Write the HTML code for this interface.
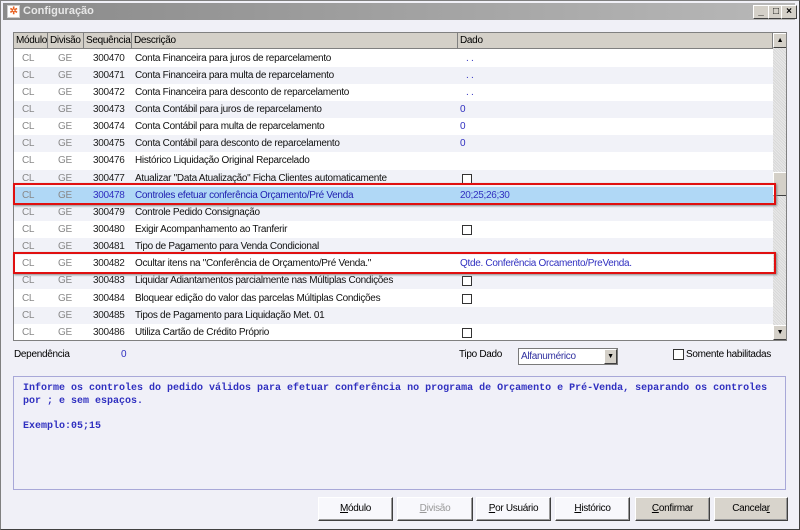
<!DOCTYPE html>
<html><head><meta charset="utf-8"><style>
*{margin:0;padding:0;box-sizing:border-box}
body{width:800px;height:530px;overflow:hidden;background:#d4d0c8;font-family:"Liberation Sans",sans-serif;font-size:10px;letter-spacing:-0.3px;position:relative}
.a{position:absolute}
#win{left:0;top:0;width:800px;height:530px;background:#f0f0f7;border:1px solid #808080;border-right-color:#404040;border-bottom-color:#404040}
#title{left:3px;top:3px;width:792px;height:17px;background:linear-gradient(90deg,#8a8a8a,#b8b8b8);color:#e8e8e8;font-weight:bold;font-size:11px;letter-spacing:0;line-height:17px;padding-left:20px}
.tb{top:5px;width:16px;height:14px;background:#d4d0c8;border:1px solid;border-color:#fff #404040 #404040 #fff;font-size:10px;line-height:11px;text-align:center;font-weight:bold;letter-spacing:0}
#grid{left:13px;top:32px;width:774px;height:309px;border:1px solid #808080;background:#fff;overflow:hidden}
.hd{top:0;height:16px;background:#d4d0c8;border-right:1px solid #808080;border-bottom:1px solid #808080;line-height:15px;padding-left:2px;overflow:hidden;white-space:nowrap}
.row{left:0;width:759px;height:17px;line-height:17px;white-space:nowrap}
.row span{position:absolute;top:0}
.c1{left:8px;color:#888}.c2{left:44px;color:#888}.c3{left:79px;color:#222}.c4{left:121px;color:#111}.c5{left:446px;color:#3030c0}
.cb{display:inline-block;width:10px;height:10px;border:1px solid #333;background:#fff;margin-top:4px}
.btn{top:497px;height:24px;border:1px solid;border-color:#fff #404040 #404040 #fff;background:#f8f8fc;text-align:center;line-height:21px;box-shadow:inset -1px -1px 0 #999}
.red{border:2px solid #e01010;box-shadow:1px 1px 2px #888}
</style></head><body>
<div id="win" class="a"></div>
<div id="title" class="a">Configuração</div>
<div class="a" style="left:7px;top:5px;width:13px;height:13px;background:#fff;border:1px solid #ccc;color:#e86020;font-size:10px;line-height:11px;text-align:center;font-weight:bold">✲</div>
<div class="a tb" style="left:753px">_</div>
<div class="a tb" style="left:768px">□</div>
<div class="a tb" style="left:781px">×</div>
<div id="grid" class="a">
<div class="a hd" style="left:0;width:34px">Módulo</div>
<div class="a hd" style="left:34px;width:36px">Divisão</div>
<div class="a hd" style="left:70px;width:48px">Sequência</div>
<div class="a hd" style="left:118px;width:326px">Descrição</div>
<div class="a hd" style="left:444px;width:315px">Dado</div>
<div class="a" style="left:759px;top:0;width:14px;height:309px;background:repeating-linear-gradient(45deg,#e8e8e8 0 1px,#d8d8d8 1px 2px)"></div>
<div class="a" style="left:759px;top:0;width:14px;height:15px;background:#d4d0c8;border:1px solid;border-color:#fff #404040 #404040 #fff;font-size:7px;text-align:center;line-height:13px">▲</div>
<div class="a" style="left:759px;top:139px;width:14px;height:24px;background:#d4d0c8;border:1px solid;border-color:#fff #404040 #404040 #fff"></div>
<div class="a" style="left:759px;top:292px;width:14px;height:15px;background:#d4d0c8;border:1px solid;border-color:#fff #404040 #404040 #fff;font-size:7px;text-align:center;line-height:13px">▼</div>
<div id="rows"></div>
</div>
<div class="a red" style="left:13px;top:183px;width:763px;height:22px"></div>
<div class="a red" style="left:13px;top:252px;width:763px;height:22px"></div>

<div class="a" style="left:14px;top:349px">Dependência</div>
<div class="a" style="left:121px;top:349px;color:#3030c0">0</div>
<div class="a" style="left:459px;top:349px">Tipo Dado</div>
<div class="a" style="left:518px;top:348px;width:100px;height:17px;background:#fff;border:1px solid #7a7a7a;line-height:15px;padding-left:2px;color:#3030a0">Alfanumérico</div>
<div class="a" style="left:604px;top:349px;width:13px;height:15px;background:#d4d0c8;border:1px solid;border-color:#fff #404040 #404040 #fff;font-size:7px;text-align:center;line-height:13px">▼</div>
<div class="a" style="left:673px;top:349px;width:11px;height:11px;border:1px solid #333;background:#fff"></div>
<div class="a" style="left:686px;top:349px">Somente habilitadas</div>
<div class="a" style="left:13px;top:376px;width:773px;height:114px;border:1px solid #a8a8d8;background:#f0f0f8;font-family:'Liberation Mono',monospace;font-weight:bold;font-size:10px;letter-spacing:0;color:#3030c0;line-height:12.5px;padding:6px 9px;white-space:nowrap">Informe os controles do pedido válidos para efetuar conferência no programa de Orçamento e Pré-Venda, separando os controles<br>por ; e sem espaços.<br><br>Exemplo:05;15</div>
<div class="a btn" style="left:318px;width:75px"><u>M</u>ódulo</div>
<div class="a btn" style="left:397px;width:76px;color:#999"><u>D</u>ivisão</div>
<div class="a btn" style="left:476px;width:75px"><u>P</u>or Usuário</div>
<div class="a btn" style="left:555px;width:75px"><u>H</u>istórico</div>
<div class="a btn" style="left:635px;width:75px;background:#d8d4cc"><u>C</u>onfirmar</div>
<div class="a btn" style="left:714px;width:74px;background:#d8d4cc">Cancela<u>r</u></div>
<script>
var d=[["300470","Conta Financeira para juros de reparcelamento",". ."],["300471","Conta Financeira para multa de reparcelamento",". ."],["300472","Conta Financeira para desconto de reparcelamento",". ."],["300473","Conta Contábil para juros de reparcelamento","0"],["300474","Conta Contábil para multa de reparcelamento","0"],["300475","Conta Contábil para desconto de reparcelamento","0"],["300476","Histórico Liquidação Original Reparcelado",""],["300477","Atualizar \"Data Atualização\" Ficha Clientes automaticamente","cb"],["300478","Controles efetuar conferência Orçamento/Pré Venda","20;25;26;30"],["300479","Controle Pedido Consignação",""],["300480","Exigir Acompanhamento ao Tranferir","cb"],["300481","Tipo de Pagamento para Venda Condicional",""],["300482","Ocultar itens na \"Conferência de Orçamento/Pré Venda.\"","Qtde. Conferência Orcamento/PreVenda."],["300483","Liquidar Adiantamentos parcialmente nas Múltiplas Condições","cb"],["300484","Bloquear edição do valor das parcelas Múltiplas Condições","cb"],["300485","Tipos de Pagamento para Liquidação Met. 01",""],["300486","Utiliza Cartão de Crédito Próprio","cb"]];
var h="";d.forEach(function(r,i){var top=16.5+i*17.15;var bg=i==8?"#b0d8f6":(i%2?"#f1f2f8":"#fff");var sel=i==8;var v=r[2]=="cb"?'<span class="c5" style="left:448px"><i class="cb"></i></span>':'<span class="c5"'+(r[2]==". ."?' style="left:452px"':'')+'>'+r[2]+'</span>';
h+='<div class="a row" style="top:'+top+'px;background:'+bg+'"><span class="c1">CL</span><span class="c2">GE</span><span class="c3"'+(sel?' style="color:#3030c0"':'')+'>'+r[0]+'</span><span class="c4"'+(sel?' style="color:#2020b0"':'')+'>'+r[1]+'</span>'+v+'</div>';});
document.getElementById("rows").innerHTML=h;
</script>
</body></html>
